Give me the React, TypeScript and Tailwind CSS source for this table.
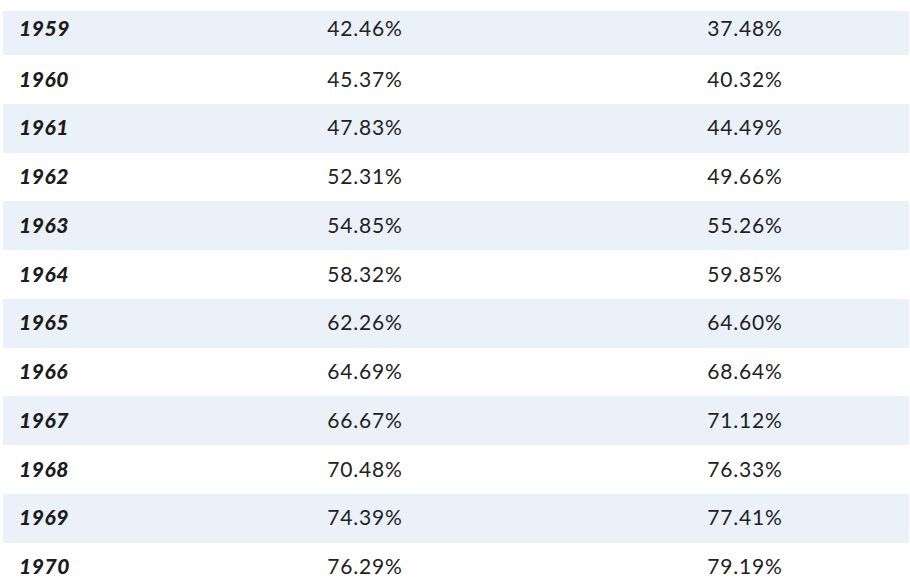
const rows: [string, string, string][] = [
  ["1959", "42.46%", "37.48%"],
  ["1960", "45.37%", "40.32%"],
  ["1961", "47.83%", "44.49%"],
  ["1962", "52.31%", "49.66%"],
  ["1963", "54.85%", "55.26%"],
  ["1964", "58.32%", "59.85%"],
  ["1965", "62.26%", "64.60%"],
  ["1966", "64.69%", "68.64%"],
  ["1967", "66.67%", "71.12%"],
  ["1968", "70.48%", "76.33%"],
  ["1969", "74.39%", "77.41%"],
  ["1970", "76.29%", "79.19%"],
];

export default function App() {
  return (
    <div className="w-[910px] h-[588px] overflow-hidden bg-white pt-[11px] pl-[3px] pr-[1px] text-[#222] font-['Lato',sans-serif]">
      {rows.map(([year, a, b], i) => (
        <div
          key={year}
          className={`flex items-center ${i === 0 ? "h-[44px] pb-[10px]" : "h-[48.75px] pb-[2px]"} ${i % 2 === 0 ? "bg-[#eaf1f9]" : "bg-white"}`}
        >
          <div className="w-[172px] pl-4 text-[21px] font-black italic tracking-[0.6px] text-[#1c1c1c]">{year}</div>
          <div className="w-[380px] text-center text-[21px] tracking-[0.8px]">{a}</div>
          <div className="flex-1 pl-[26px] text-center text-[21px] tracking-[0.8px]">{b}</div>
        </div>
      ))}
    </div>
  );
}
